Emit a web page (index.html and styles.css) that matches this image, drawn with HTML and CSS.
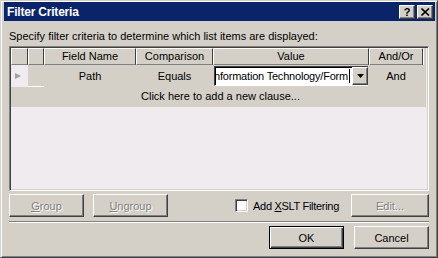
FILE: index.html
```html
<!DOCTYPE html>
<html>
<head>
<meta charset="utf-8">
<link rel="stylesheet" href="styles.css">
</head>
<body>
<div class="window">
  <div class="titlebar">
    <span class="title">Filter Criteria</span>
    <div class="tbtns">
      <span class="tbtn">?</span>
      <span class="tbtn close">
        <svg width="9" height="8" viewBox="0 0 9 8"><path d="M0.5 0.5 L8 7.5 M8 0.5 L0.5 7.5" stroke="#000" stroke-width="1.6"/></svg>
      </span>
    </div>
  </div>
  <div class="content">
    <div class="intro">Specify filter criteria to determine which list items are displayed:</div>
    <div class="grid">
      <div class="hrow">
        <div class="hc c0"></div>
        <div class="hc c1"></div>
        <div class="hc c2">Field Name</div>
        <div class="hc c3">Comparison</div>
        <div class="hc c4">Value</div>
        <div class="hc c5">And/Or</div>
        <div class="hfill"></div>
      </div>
      <div class="row">
        <div class="rc c0 sel"><svg width="8" height="8" viewBox="0 0 8 8"><path d="M1 1 L7 4 L1 7 Z" fill="#a0a0a0"/></svg></div>
        <div class="rc c1 blank"></div>
        <div class="rc c2">Path</div>
        <div class="rc c3">Equals</div>
        <div class="rc c4">
          <div class="combo">
            <div class="ctext"><span class="clip">nformation Technology/Form</span><span class="caret"></span></div>
            <div class="cbtn"><svg width="7" height="4" viewBox="0 0 7 4"><path d="M0 0 H7 L3.5 4 Z" fill="#000"/></svg></div>
          </div>
        </div>
        <div class="rc c5">And</div>
      </div>
      <div class="addrow">Click here to add a new clause...</div>
      <div class="empty"></div>
    </div>
    <div class="toolrow">
      <button class="btn dis"><u>G</u>roup</button>
      <button class="btn dis"><u>U</u>ngroup</button>
      <div class="spacer"></div>
      <label class="chk"><span class="box"></span><span class="chktext">Add <u>X</u>SLT Filtering</span></label>
      <button class="btn dis edit">Edit...</button>
    </div>
    <div class="sep"></div>
    <div class="okrow">
      <button class="btn def">OK</button>
      <button class="btn">Cancel</button>
    </div>
  </div>
</div>
</body>
</html>
```

FILE: styles.css
```css
* { box-sizing: border-box; }
body { margin: 0; background: #d4d0c8; font-family: "Liberation Sans", Arial, sans-serif; font-size: 11px; color: #000; }
.window {
  width: 438px; height: 258px; background: #d4d0c8;
  border-top: 1px solid #d4d0c8; border-left: 1px solid #d4d0c8;
  border-right: 1px solid #404040; border-bottom: 1px solid #404040;
  box-shadow: inset 1px 1px 0 #fff, inset -1px -1px 0 #808080;
  padding: 1px 2px 2px 2px;
  display: flex; flex-direction: column;
}
.titlebar {
  height: 19px; background: #0a246a; display: flex; align-items: center; justify-content: space-between;
  padding: 0 2px 0 2px; margin-left: 1px;
}
.title { color: #fff; font-weight: bold; font-size: 12px; padding-left: 1px; letter-spacing: -0.2px; }
.tbtns { display: flex; gap: 2px; }
.tbtn {
  width: 16px; height: 14px; background: #d4d0c8; display: flex; align-items: center; justify-content: center;
  font-weight: bold; font-size: 11px;
  border-top: 1px solid #fff; border-left: 1px solid #fff; border-right: 1px solid #404040; border-bottom: 1px solid #404040;
  box-shadow: inset -1px -1px 0 #808080;
}
.content { padding: 0 6px 0 6px; display: flex; flex-direction: column; flex: 1; }
.intro { margin-top: 9px; height: 13px; line-height: 13px; }
.grid {
  margin-top: 3px; height: 145px; display: flex; flex-direction: column;
  border-top: 1px solid #808080; border-left: 1px solid #808080; border-right: 1px solid #fff; border-bottom: 1px solid #fff;
  box-shadow: inset 1px 1px 0 #404040, inset -1px -1px 0 #d4d0c8;
  padding: 1px 2px 1px 1px; background: #efebef;
}
.hrow { display: flex; height: 17px; background: #d4d0c8; }
.c0 { width: 17px; } .c1 { width: 16px; } .c2 { width: 92px; } .c3 { width: 77px; } .c4 { width: 156px; } .c5 { width: 54px; }
.hc {
  height: 17px; line-height: 14px; text-align: center;
  border-top: 1px solid #fff; border-left: 1px solid #fff; border-right: 1px solid #404040; border-bottom: 1px solid #808080;
}
.hfill { flex: 1; border-left: 1px solid #fff; }
.row { display: flex; height: 22px; background: #d4d0c8; align-items: stretch; }
.rc { display: flex; align-items: center; justify-content: center; padding-bottom: 1px; }
.sel { background: #efebef; justify-content: flex-start; padding-left: 3px; }
.blank { border-bottom: 1px solid #fff; }
.combo { width: 154px; height: 20px; display: flex; margin: 0 1px; border-top: 1px solid #404040; border-left: 1px solid #404040; border-bottom: 1px solid #fff; }
.ctext { flex: 1; background: #fff; display: flex; align-items: center; overflow: hidden; white-space: nowrap; border-top: 1px solid #000; border-left: 1px solid #000; }
.clip { margin-left: -2px; letter-spacing: -0.2px; }
.caret { width: 1px; height: 14px; background: #000; margin-left: 1px; flex: none; }
.cbtn {
  width: 16px; flex: none; background: #d4d0c8; display: flex; align-items: center; justify-content: center;
  border-top: 1px solid #fff; border-left: 1px solid #fff; border-right: 1px solid #404040; border-bottom: 1px solid #404040;
  box-shadow: inset -1px -1px 0 #808080;
}
.addrow { height: 20px; line-height: 19px; background: #d4d0c8; padding-left: 130px; }
.empty { flex: 1; }
.toolrow { display: flex; align-items: center; margin-top: 3px; height: 23px; }
.btn {
  font-family: "Liberation Sans", Arial, sans-serif; font-size: 11px; color: #000;
  width: 75px; height: 23px; background: #d4d0c8; padding: 0;
  border-top: 1px solid #fff; border-left: 1px solid #fff; border-right: 1px solid #404040; border-bottom: 1px solid #404040;
  box-shadow: inset -1px -1px 0 #808080;
}
.toolrow .btn + .btn { margin-left: 9px; }
.dis { color: #808080; text-shadow: 1px 1px 0 #fff; }
.spacer { flex: 1; }
.chk { display: flex; align-items: center; margin-right: 12px; }
.box {
  width: 13px; height: 13px; background: #fff; margin-right: 5px;
  border-top: 1px solid #808080; border-left: 1px solid #808080; border-right: 1px solid #fff; border-bottom: 1px solid #fff;
  box-shadow: inset 1px 1px 0 #404040, inset -1px -1px 0 #d4d0c8;
}
.chktext { white-space: pre; letter-spacing: -0.3px; }
.edit { width: 78px; }
.sep { margin-top: 4px; height: 2px; border-top: 1px solid #808080; border-bottom: 1px solid #fff; }
.okrow { display: flex; justify-content: flex-end; gap: 10px; margin-top: 3px; }
.def { border: 1px solid #000; box-shadow: inset 1px 1px 0 #fff, inset -1px -1px 0 #404040, inset -2px -2px 0 #808080; }
```
